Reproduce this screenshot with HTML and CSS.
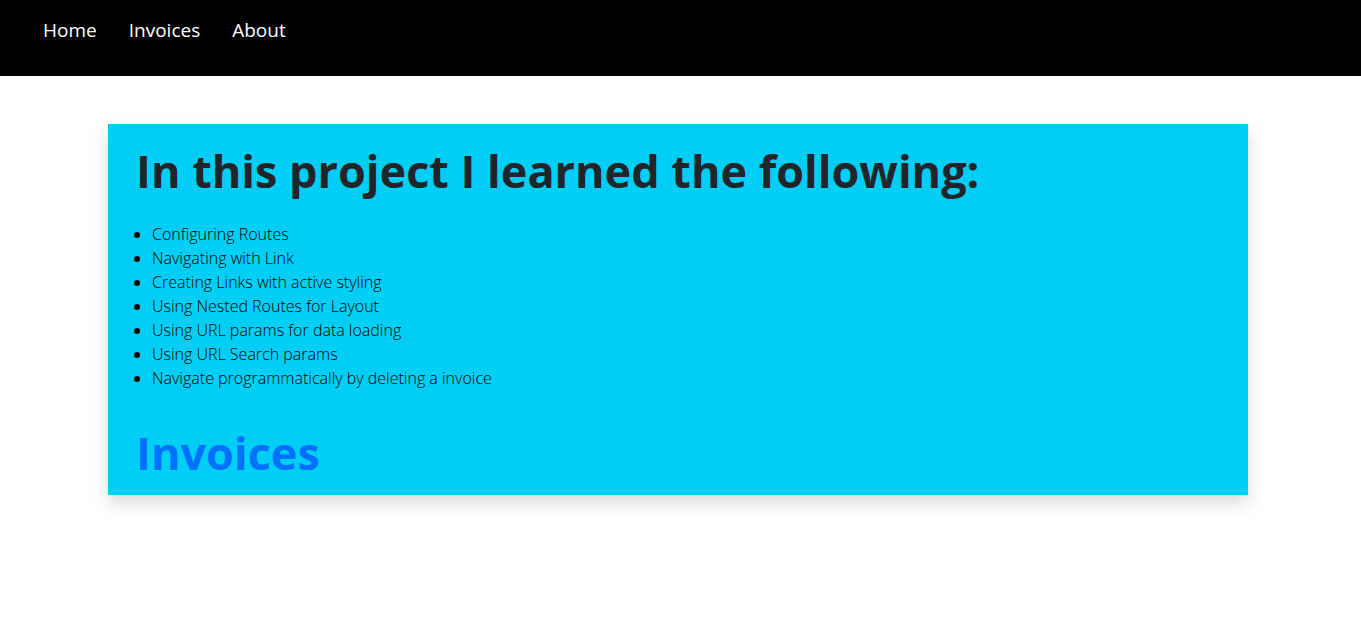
FILE: index.html
```html
<!DOCTYPE html>
<html lang="en">
<head>
<meta charset="utf-8">
<meta name="viewport" content="width=device-width, initial-scale=1">
<title>Invoices</title>
<link rel="stylesheet" href="styles.css">
</head>
<body>
<nav class="navbar">
  <a class="nav-link" href="#home">Home</a>
  <a class="nav-link" href="#invoices">Invoices</a>
  <a class="nav-link" href="#about">About</a>
</nav>
<main class="page">
  <section class="card">
    <h1 class="title">In this project I learned the following:</h1>
    <ul class="topics">
      <li>Configuring Routes</li>
      <li>Navigating with Link</li>
      <li>Creating Links with active styling</li>
      <li>Using Nested Routes for Layout</li>
      <li>Using URL params for data loading</li>
      <li>Using URL Search params</li>
      <li>Navigate programmatically by deleting a invoice</li>
    </ul>
    <a class="title title-link" href="#invoices">Invoices</a>
  </section>
</main>
</body>
</html>
```
FILE: styles.css
```css
* {
  box-sizing: border-box;
}

body {
  margin: 0;
  background: #fff;
  color: #212529;
  font-family: "Segoe UI", "Open Sans", "Noto Sans", sans-serif;
  font-size: 16px;
  line-height: 24px;
}

.navbar {
  display: flex;
  gap: 32px;
  padding: 15px 43px 31px;
  background: #000;
}

.nav-link {
  color: #fff;
  font-size: 19px;
  line-height: 30px;
  text-decoration: none;
}

.page {
  padding: 48px 5px 48px 0;
}

.card {
  max-width: 1140px;
  margin: 0 auto;
  padding: 18px 28px 13px;
  background: #00cef4;
  box-shadow: 0 8px 16px rgba(0, 0, 0, 0.15);
}

.title {
  display: block;
  margin: 0;
  font-size: 45px;
  font-weight: 700;
  line-height: 58px;
}

.topics {
  margin: 22px 0 34px;
  padding-left: 16px;
  color: #000;
  font-weight: 300;
}

.title-link {
  color: #0070ff;
  text-decoration: none;
}
```
